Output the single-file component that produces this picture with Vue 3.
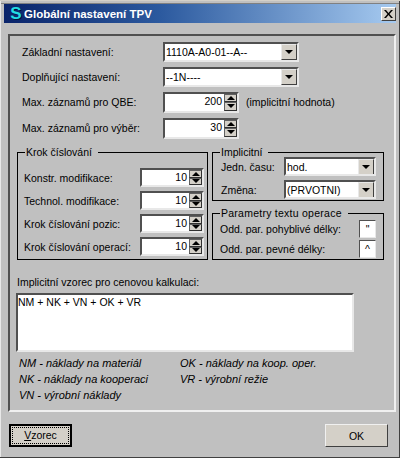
<script setup>
const stepRows = [
  { label: 'Konstr. modifikace:', value: '10' },
  { label: 'Technol. modifikace:', value: '10' },
  { label: 'Krok číslování pozic:', value: '10' },
  { label: 'Krok číslování operací:', value: '10' },
]
</script>

<template>
  <div class="window">
    <div class="titlebar">
      <span class="logo">S</span>
      <span class="title">Globální nastavení TPV</span>
      <button class="close" aria-label="Zavřít">
        <svg width="9" height="8" viewBox="0 0 9 8"><path d="M0 0h2l2.500 3L7 0h2L5.500 4 9 8H7L4.500 5 2 8H0l3.500-4z" fill="#000"/></svg>
      </button>
    </div>

    <div class="panel">
      <div class="row row-first">
        <label class="row-label">Základní nastavení:</label>
        <div class="combo combo-wide">
          <span class="combo-text">1110A-A0-01--A--</span>
          <span class="combo-btn"><i class="down"></i></span>
        </div>
      </div>
      <div class="row row-second">
        <label class="row-label">Doplňující nastavení:</label>
        <div class="combo combo-wide">
          <span class="combo-text">--1N----</span>
          <span class="combo-btn"><i class="down"></i></span>
        </div>
      </div>
      <div class="row row-third">
        <label class="row-label">Max. záznamů pro QBE:</label>
        <div class="spin spin-top">
          <span class="spin-value">200</span>
          <span class="spin-btns"><span class="spin-btn"><i class="up"></i></span><span class="spin-btn"><i class="down"></i></span></span>
        </div>
        <span class="hint">(implicitní hodnota)</span>
      </div>
      <div class="row row-fourth">
        <label class="row-label">Max. záznamů pro výběr:</label>
        <div class="spin spin-top">
          <span class="spin-value">30</span>
          <span class="spin-btns"><span class="spin-btn"><i class="up"></i></span><span class="spin-btn"><i class="down"></i></span></span>
        </div>
      </div>

      <div class="groups">
        <fieldset class="group group-step">
          <legend>Krok číslování</legend>
          <div v-for="row in stepRows" :key="row.label" class="step-row">
            <label>{{ row.label }}</label>
            <div class="spin spin-step">
              <span class="spin-value">{{ row.value }}</span>
              <span class="spin-btns"><span class="spin-btn"><i class="up"></i></span><span class="spin-btn"><i class="down"></i></span></span>
            </div>
          </div>
        </fieldset>

        <div class="group-col">
          <fieldset class="group group-impl">
            <legend>Implicitní</legend>
            <div class="impl-row impl-first">
              <label>Jedn. času:</label>
              <div class="combo combo-small">
                <span class="combo-text">hod.</span>
                <span class="combo-btn"><i class="down"></i></span>
              </div>
            </div>
            <div class="impl-row">
              <label>Změna:</label>
              <div class="combo combo-small">
                <span class="combo-text">(PRVOTNI)</span>
                <span class="combo-btn"><i class="down"></i></span>
              </div>
            </div>
          </fieldset>
          <fieldset class="group group-param">
            <legend>Parametry textu operace</legend>
            <div class="param-row">
              <label>Odd. par. pohyblivé délky:</label>
              <span class="char">"</span>
            </div>
            <div class="param-row">
              <label>Odd. par. pevné délky:</label>
              <span class="char">^</span>
            </div>
          </fieldset>
        </div>
      </div>

      <div class="formula-label">Implicitní vzorec pro cenovou kalkulaci:</div>
      <div class="formula">NM + NK + VN + OK + VR</div>

      <div class="notes">
        <span>NM - náklady na materiál</span>
        <span>OK - náklady na koop. oper.</span>
        <span>NK - náklady na kooperaci</span>
        <span>VR - výrobní režie</span>
        <span>VN - výrobní náklady</span>
      </div>
    </div>

    <div class="footer">
      <button class="btn btn-default"><span class="focus"><u>V</u>zorec</span></button>
      <button class="btn">OK</button>
    </div>
  </div>
</template>

<style>
html, body { margin: 0; background: #c0c0c0; }
</style>

<style scoped>
.window {
  box-sizing: border-box;
  width: 400px;
  height: 458px;
  padding: 4px 4px 3px;
  background: #c0c0c0;
  border-top: 1px solid #d4d0c8;
  box-shadow: inset 0 -1px 0 #404040, inset -1px 0 0 #404040, inset 1px 0 0 #e8e8e8, inset 0 2px 0 #c0c0c0, inset 0 3px 0 #808080;
  font-family: "Liberation Sans", Arial, sans-serif;
  font-size: 10.500px;
  color: #000;
  overflow: hidden;
}
.titlebar {
  display: flex;
  align-items: center;
  height: 19px;
  margin-top: -1px;
  background: linear-gradient(90deg, #0a246a 0%, #2c5a9f 40%, #a6caf0 100%);
  color: #fff;
}
.logo {
  width: 16px;
  margin-left: 4px;
  font: bold 17px "Liberation Sans", sans-serif;
  color: #22dce4;
  text-align: center;
  text-shadow: 1px 1px 0 #02123a;
}
.title {
  margin-left: 0;
  font-weight: bold;
  font-size: 11.500px;
}
.close {
  display: flex;
  align-items: center;
  justify-content: center;
  box-sizing: border-box;
  width: 15px;
  height: 14px;
  margin-left: auto;
  margin-right: 0;
  padding: 0;
  background: #d4d0c8;
  border: 1px solid;
  border-color: #fff #404040 #404040 #fff;
}
.panel {
  box-sizing: border-box;
  height: 378px;
  margin: 11px 0 0 4px;
  border: 2px solid;
  border-color: #505050 #f0f0f0 #f0f0f0 #505050;
  padding: 0 10px 0 7px;
}
.row {
  display: flex;
  align-items: center;
  height: 20px;
}
.row-first { margin-top: 6px; }
.row-second { margin-top: 5px; }
.row-third { margin-top: 5px; }
.row-fourth { margin-top: 6px; }
.row-label { width: 146px; flex: none; padding-left: 5px; box-sizing: border-box; }

.combo {
  display: flex;
  align-items: center;
  box-sizing: border-box;
  background: #fff;
  border: 2px solid;
  border-color: #505050 #e8e8e8 #e8e8e8 #505050;
  overflow: hidden;
}
.combo-wide { width: 136px; height: 20px; }
.combo-small { width: 92px; height: 19px; }
.combo-text { flex: 1; padding-left: 1px; white-space: nowrap; }
.combo-btn {
  display: flex;
  align-items: center;
  justify-content: center;
  box-sizing: border-box;
  width: 16px;
  height: 16px;
  background: #d4d0c8;
  border: 1px solid;
  border-color: #e8e8e8 #404040 #404040 #e8e8e8;
}
.down, .up {
  display: block;
  width: 0;
  height: 0;
  border-left: 4px solid transparent;
  border-right: 4px solid transparent;
}
.down { border-top: 4px solid #000; }
.up { border-bottom: 4px solid #000; }

.spin {
  display: flex;
  box-sizing: border-box;
  background: #fff;
  border: 2px solid;
  border-color: #505050 #e8e8e8 #e8e8e8 #505050;
}
.spin-top { width: 76px; height: 21px; }
.spin-step { width: 64px; height: 19px; }
.spin-value { flex: 1; text-align: right; padding-right: 2px; line-height: 15px; }
.spin-btns { display: flex; flex-direction: column; width: 13px; }
.spin-btn {
  flex: 1;
  display: flex;
  align-items: center;
  justify-content: center;
  box-sizing: border-box;
  background: #d4d0c8;
  border: 1px solid;
  border-color: #606060 #303030 #303030 #606060;
}
.spin-btn .up, .spin-btn .down { border-left-width: 4px; border-right-width: 4px; }
.spin-btn .up { border-bottom-width: 4px; }
.spin-btn .down { border-top-width: 4px; }
.hint { margin-left: 7px; }

.groups { display: flex; gap: 4px; margin-top: 5px; }
.group {
  margin: 0;
  box-sizing: border-box;
  border: 1px solid #000;
  min-width: 0;
}
.group legend {
  padding: 0 6px 0 1px;
  margin-left: -1px;
  line-height: 14px;
}
.group-step { width: 192px; height: 115px; padding: 9px 3px 0 6px; margin-top: 2px; }
.group-step legend { margin-left: 1px; }
.step-row {
  display: flex;
  align-items: center;
  justify-content: space-between;
  height: 19px;
  margin-bottom: 4px;
}
.group-col { display: flex; flex-direction: column; gap: 5px; margin-top: 2px; }
.group-impl { width: 172px; height: 56px; padding: 0 7px 0 8px; }
.impl-row { display: flex; align-items: center; justify-content: space-between; height: 19px; margin-bottom: 4px; }
.impl-first { margin-top: -2px; }
.group-param { width: 172px; height: 54px; padding: 0 7px 0 7px; }
.group-param legend { margin-left: 0; letter-spacing: 0.25px; }
.param-row { display: flex; align-items: center; justify-content: space-between; height: 18px; margin-bottom: 2px; }
.char {
  box-sizing: border-box;
  width: 17px;
  height: 18px;
  background: #fff;
  border: 1px solid;
  border-color: #505050 #e8e8e8 #e8e8e8 #505050;
  text-align: center;
  line-height: 16px;
}

.formula-label { margin-top: 15px; line-height: 14px; }
.formula {
  box-sizing: border-box;
  width: 338px;
  height: 59px;
  margin-top: 4px;
  margin-left: -1px;
  padding: 1px 0 0;
  background: #fff;
  border: 2px solid;
  border-color: #505050 #e8e8e8 #e8e8e8 #505050;
}
.notes {
  display: grid;
  grid-template-columns: 161px 1fr;
  row-gap: 2px;
  margin-top: 4px;
  padding-left: 2px;
  font-style: italic;
  font-size: 11px;
  line-height: 14px;
}

.footer {
  display: flex;
  justify-content: space-between;
  padding: 12px 8px 0 5px;
}
.btn {
  box-sizing: border-box;
  width: 63px;
  height: 23px;
  padding: 0;
  background: #d4d0c8;
  border: 1px solid;
  border-color: #f0f0f0 #404040 #404040 #f0f0f0;
  font: 10.500px "Liberation Sans", Arial, sans-serif;
}
.btn-default { border: 2px solid #000; padding: 1px; }
.focus {
  display: block;
  height: 100%;
  box-sizing: border-box;
  border: 1px dotted #000;
  line-height: 15px;
}
</style>
